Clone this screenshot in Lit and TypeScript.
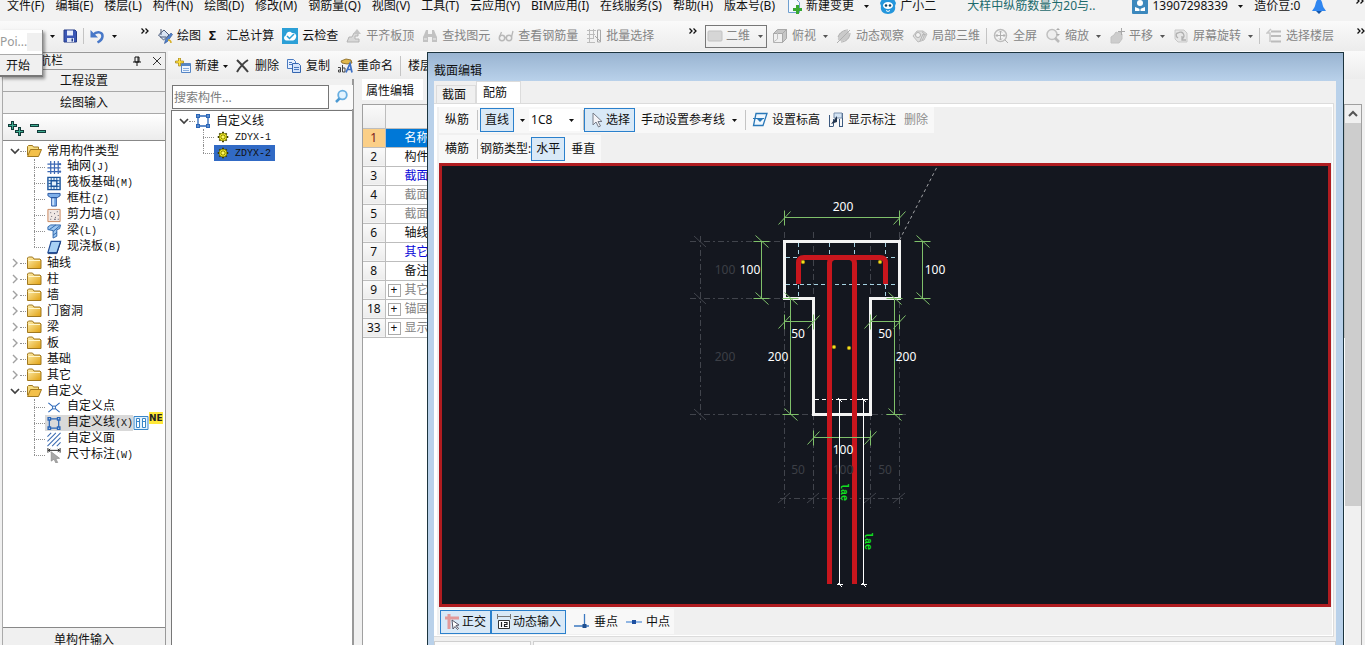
import { LitElement, html, svg, css, nothing, TemplateResult } from "lit";
import { customElement, property } from "lit/decorators.js";
import { classMap } from "lit/directives/class-map.js";

const folder = svg`<defs><linearGradient id="g" x1="0" y1="0" x2="1" y2="1"><stop offset="0" stop-color="#fff0b0"/><stop offset="1" stop-color="#e0a010"/></linearGradient></defs>
  <path d="M1.500 4.500V3l1-1h4l1.500 2h6l1 1v8.500H1.500z" fill="url(#g)" stroke="#a07820"/><path d="M2.500 5.500h11.500" stroke="#fff6cc"/>`;
const folderOpen = svg`<path d="M1.500 12V3.500l1-1h4l1 1.500h5V6" fill="#f7dc80" stroke="#a07820"/><path d="M1.500 13.500L4.500 6.500h11l-3 7z" fill="#f3c04a" stroke="#a07820"/>`;
const frame = svg`<path d="M3 3h10v10H3z" fill="none" stroke="#2a66b8" stroke-width="1.300"/><path d="M1 1h4v4H1zM11 1h4v4h-4zM1 11h4v4H1zM11 11h4v4h-4z" fill="#2a66b8"/><path d="M2.500 2.500h1v1h-1zM12.500 2.500h1v1h-1zM2.500 12.500h1v1h-1zM12.500 12.500h1v1h-1z" fill="#fff"/>`;
const gear = svg`<path d="M8 2v12M2 8h12M3.800 3.800l8.400 8.400M12.200 3.800l-8.400 8.400" stroke="#3a3a00" stroke-width="2.200"/><circle cx="8" cy="8" r="4.500" fill="#f4ec20" stroke="#4a4a00" stroke-width=".6"/><path d="M8 4v8M4 8h8M5.500 5.500l5 5M10.500 5.500l-5 5" stroke="#4a4a00" stroke-width=".7"/><circle cx="8" cy="8" r="1.500" fill="#fff86a"/>`;

const ICONS: Record<string, TemplateResult> = {
  folder, folderOpen, frame, gear,
  save: svg`<path d="M2 2h11l1.500 1.500V14H2z" fill="#3b57b5" stroke="#263c88"/><path d="M5 2.500h6v5H5z" fill="#e8eefc"/><path d="M5 10h7v4H5z" fill="#dde4f4"/><path d="M9.500 10.500h1.500v3H9.500z" fill="#263c88"/>`,
  undo: svg`<path d="M4 7C8 2.500 14 4 13.500 8.500c-.4 3-2 4.500-5 6" fill="none" stroke="#4878c8" stroke-width="2.500"/><path d="M1.500 2v7.500H9z" fill="#4878c8"/>`,
  paint: svg`<path d="M1.500 7L7 2l5 5-5.500 5z" fill="#d8e4f4" stroke="#4a5a78"/><path d="M4 1v6M3 9h6" stroke="#4a5a78" fill="none"/><path d="M14 5l1.500 1.500-5 7-3 2 1-4z" fill="#4f83cc" stroke="#2b4f90" stroke-width=".6"/><path d="M11 12c2 0 3 1 3 3" stroke="#d8b02a" stroke-width="1.500" fill="none"/>`,
  cloudCheck: svg`<path d="M0 0h16v16H0z" fill="#2b9fd6"/><path d="M3 12c-2-2-.5-4.500 1-4.500C4 4 8 2.500 10 5c3-.5 5 2 4 4.500-.5 2-2 3-3 3H4z" fill="#fff"/><path d="M5 8l2.500 2.500L12 6" fill="none" stroke="#2b9fd6" stroke-width="1.500"/>`,
  align: svg`<path d="M1 14h12v-3H9V8h3V5H8l-2 4H3z" fill="#d8d8d8" stroke="#b4b4b4"/><path d="M7 6l4-5 4 5z" fill="#c4c4c4"/>`,
  bino: svg`<path d="M2 7l2-5h2v12H1V9zM14 7l-2-5h-2v12h5V9zM6 6h4v3H6z" fill="#c2c2c2"/><path d="M2 11h3M11 11h3" stroke="#eee"/>`,
  glasses: svg`<circle cx="4" cy="10" r="2.700" fill="none" stroke="#b8b8b8" stroke-width="1.500"/><circle cx="11" cy="10" r="2.700" fill="none" stroke="#b8b8b8" stroke-width="1.500"/><path d="M1.500 9l2-5M13.500 9l1.500-6M6.500 9.500h2" stroke="#b8b8b8" fill="none" stroke-width="1.300"/>`,
  batch: svg`<path d="M1 2.500h9M1 6.500h8M1 10.500h6M1 14.500h8M3.500 1v14M7.500 1v10" stroke="#bcbcbc"/><path d="M11.500 2h3v12h-3zM9 8l5 5" fill="none" stroke="#a8a8a8"/>`,
  rect: svg`<rect x="1" y="3" width="14" height="10" rx="1" fill="#d6d6d6" stroke="#c2c2c2"/>`,
  cube: svg`<path d="M1.500 5.500h9v9h-9z" fill="#f0f0f0" stroke="#b0b0b0"/><path d="M1.500 5.500l4-4h9l-4 4zM14.500 1.500v9l-4 4v-9z" fill="#c6c6c6" stroke="#a8a8a8"/><path d="M5.500 2v9l-4 3" fill="none" stroke="#c0c0c0"/>`,
  orbit: svg`<path d="M2 12C1 6 6 2 12 3c4 5-1 11-7 10z" fill="#cacaca"/><path d="M1 15L14 2M5 14c5 0 9-4 9-9M2 9c2-5 6-7 10-7" stroke="#b0b0b0" fill="none"/>`,
  local3d: svg`<path d="M1 8l4-5h6l4 3-3 6-6 2z" fill="#dedede" stroke="#bcbcbc"/><circle cx="6" cy="7" r="2.500" fill="#f4f4f4" stroke="#b0b0b0"/><path d="M8 13l3-7 3 1M10 4c3 1 3 4 0 8" stroke="#b4b4b4" fill="none"/>`,
  full: svg`<circle cx="7.500" cy="7.500" r="6" fill="#f4f4f4" stroke="#bcbcbc" stroke-width="1.500"/><path d="M7.500 3v9M3 7.500h9M6 4.500L7.500 3 9 4.500M6 10.500L7.500 12 9 10.500M4.500 6L3 7.500 4.500 9M10.500 6L12 7.500 10.500 9M12 12l3 3" stroke="#b0b0b0" fill="none"/>`,
  zoom: svg`<circle cx="7" cy="6.500" r="5" fill="#eee" stroke="#c0c0c0" stroke-width="1.500"/><path d="M10 10l4 4" stroke="#bababa" stroke-width="2.500"/><path d="M11 2h4l-2-2zM11 6h4l-2 2z" fill="#aaa"/>`,
  hand: svg`<path d="M2 15V9l3-2 2-3 2 1 2-1 2 2v5l-3 4z" fill="#cdcdcd" stroke="#c2c2c2"/><path d="M12.500 0v7M9 3.500h7" stroke="#a8a8a8"/>`,
  rotate: svg`<path d="M2 2h9l3 3v9H5l-3-3z" fill="#e6e6e6" stroke="#c8c8c8"/><path d="M5 5c5-3 8 3 4 6M9 8v4h4M5 10c-3-2-2-5 0-5" fill="none" stroke="#b0b0b0" stroke-width="1.300"/>`,
  floors: svg`<path d="M5 3.500h10M5 8h10M5 13.500h10" stroke="#bcbcbc" stroke-width="2"/><path d="M5 1L1 5h3v9" fill="none" stroke="#c8c8c8" stroke-width="1.500"/>`,
  docPlus: svg`<path d="M2.500 1.500h8l3 3v10h-11z" fill="#f4f9ff" stroke="#6f9fcf"/><path d="M7 10h3V7h3v3h3v3h-3v3h-3v-3H7z" fill="#38a832"/>`,
  mascot: svg`<path d="M0 5l2-4 4 1h4l4-1 2 4-1 3c1 5-2 8-7 8s-8-3-7-8z" fill="#2496dc"/><ellipse cx="8" cy="7.500" rx="5" ry="3.500" fill="#fff"/><circle cx="6" cy="7.500" r="1.300" fill="#146"/><circle cx="10" cy="7.500" r="1.300" fill="#146"/><path d="M6 12.500q2 2 4 0" stroke="#fff" fill="none"/>`,
  user: svg`<rect width="16" height="16" rx="1" fill="#3c88bd"/><circle cx="8" cy="5" r="3" fill="#fff"/><path d="M3 13V9l5 2 5-2v4z" fill="#fff"/><path d="M8 9v4" stroke="#3c88bd"/>`,
  bell: svg`<path d="M3 10c2-2 1-8 5-9 4 1 3 7 5 9l2 3H1z" fill="#2f86f0"/><path d="M5 13h6l-3 3z" fill="#1456a8"/>`,
  create: svg`<path d="M6.500 5.500h9v9h-9z" fill="#eef5ff" stroke="#5585c5"/><path d="M7 6h8v2H7z" fill="#5585c5"/><path d="M8 10.500h6M8 12.500h6" stroke="#88aede"/><path d="M3.500 0h2v3h3v2h-3v3h-2V5h-3V3h3z" fill="#ffe140" stroke="#a08010" stroke-width=".7"/>`,
  remove: svg`<path d="M2 2c4 4 7 7 11 12M13 2C8 5 5 9 2 14" stroke="#404040" stroke-width="2" fill="none"/>`,
  copy: svg`<path d="M1.500 1.500h6l2 2v7h-8z" fill="#e6f0ff" stroke="#4a7ac0"/><path d="M6.500 5.500h6l2 2v7h-8z" fill="#d3e3fb" stroke="#3566b0"/><path d="M8 9.500h5M8 11.500h5M3 4.500h3M3 6.500h3" stroke="#4a7ac0"/>`,
  rename: svg`<path d="M4 3l5-2 5 1 1 3-5 1-5-1z" fill="#e2b84c" stroke="#80601a" stroke-width=".8"/><path d="M1 9.500h2.500V14H1.500v-2h2M5.500 7v7h2.500v-4H5.500" fill="none" stroke="#444"/><path d="M9 14.500l4-9 2 9M10 11.500h5" stroke="#3d6fc4" stroke-width="1.700" fill="none"/>`,
  search: svg`<circle cx="9.500" cy="6" r="4.300" fill="#e4f4ff" stroke="#68afe2" stroke-width="1.800"/><path d="M6.500 9.500L3 13" stroke="#4d9ad2" stroke-width="2.500"/>`,
  plusPlus: svg`<path d="M4.500 0v9M0 4.500h9M11.500 6v9M7 10.500h9" stroke="#123b39" stroke-width="3"/><path d="M4.500 1v7M1 4.500h7M11.500 7v7M8 10.500h7" stroke="#3fae92"/>`,
  minusMinus: svg`<path d="M0 4.500h9M7 10.500h9" stroke="#123b39" stroke-width="3"/><path d="M1 4.500h7M8 10.500h7" stroke="#3fae92"/>`,
  grid: svg`<path d="M4.500 1v14M8.500 1v14M12.500 1v14M1 4.500h14M1 8.500h14M1 12.500h14" stroke="#3c68b4" stroke-width="1.300"/><circle cx="14.500" cy="4.500" r="1.200" fill="#3c68b4"/><circle cx="14.500" cy="12.500" r="1.200" fill="#3c68b4"/>`,
  raft: svg`<path d="M1.500 1.500h13v13h-13zM5 5h6v6H5z" fill="#e4f1fc" stroke="#1c559c" stroke-width="1.500"/><path d="M5 2v3M8 2v3M11 2v3M5 11v3M8 11v3M11 11v3M2 5h3M2 8h3M2 11h3M11 5h3M11 8h3M11 11h3" stroke="#1c559c"/>`,
  column: svg`<path d="M1.500 1.500h13v2.500l-3 2h-7l-3-2zM5.500 6h5v9h-5z" fill="#7fb0ea" stroke="#2855a0"/><path d="M7 7v7" stroke="#e0efff" stroke-width="1.500"/>`,
  wall: svg`<path d="M1.500 1.500h13v13h-13z" fill="#f0e8e4" stroke="#c8845a"/><path d="M4 5h1M8 6h1M11 4h1M5 9h1M9 10h1M12 8h1M4 12h1M8 12h2M12 12h1" stroke="#556"/>`,
  beam: svg`<path d="M1.500 3l3-2h10.500l-1 4-3 1v7l-4 2V7L1.500 6z" fill="#9cc6f0" stroke="#2d65ac"/><path d="M3 6l7-5M7 8l7-6M7 12l4-3" stroke="#2d65ac"/>`,
  slab: svg`<path d="M5 1.500h10l-4 12H1.500z" fill="#a8d0f4" stroke="#234f98" stroke-width="1.300"/><path d="M1.500 14.500h9.500l4-12" fill="none" stroke="#163a78"/>`,
  point: svg`<path d="M2 3l12 10M14 3L2 13" stroke="#2a66b8" stroke-width="1.200"/><path d="M6.500 6.500h3v3h-3z" fill="#fff" stroke="#2a66b8"/>`,
  hatch: svg`<path d="M1 5l4-4M1 10l9-9M1 15L15 1M6 15l9-9M11 15l4-4" stroke="#3a6ab0" stroke-width="1.100"/>`,
  measure: svg`<path d="M1.500 0v5M14.500 0v5M2 2.500h12M4 1L2 2.500 4 4M12 1l2 1.500L12 4" stroke="#222" fill="none"/><path d="M5 4l9 7-4 .5 2 4-2 .5-2-4-3 2z" fill="#a8a8a8" stroke="#808080" stroke-width=".6"/>`,
  book: svg`<path d="M1 1.500h14v13H1z" fill="#e2f2ff" stroke="#3a86c8"/><path d="M3.500 3.500h3v9h-3zM9.500 3.500h3v9h-3z" fill="#fff" stroke="#3a86c8"/><path d="M3 6.500h4M9 6.500h4" stroke="#3a86c8"/>`,
  arrow: svg`<path d="M4 1v12l3-3 2.500 5 2-1L9 9.500h4z" fill="#f4f4f8" stroke="#777c88"/>`,
  level: svg`<path d="M4 1.500h11l-4 12H1.500z" fill="#f0f8ff" stroke="#2a78b8" stroke-width="1.300"/><path d="M1 6.500h11" stroke="#2a78b8"/><path d="M5 7h6l-3 3z" fill="#2a78b8"/>`,
  mark: svg`<path d="M1.500 3v12M14.500 1v14M1.500 14.500h4M5.500 14V7M11.500 14V7M11 14.500h4" stroke="#3c5a80" fill="none"/><path d="M6 1h8v5H6z" fill="#d4e4f4" stroke="#7a90ac"/><path d="M3 12l6-8v6z" fill="#24364e"/>`,
  ortho: svg`<path d="M0 4h14M4 0v15" stroke="#e29a9a" stroke-width="3"/><path d="M7 6l1 9 2-2.500 2.500 3 1-1L11 11.500l3-.5z" fill="#fff" stroke="#556"/>`,
  dyn: svg`<path d="M1.500 0v5M14.500 0v5M1 2.500h14" stroke="#777"/><path d="M2.500 6.500h11v8h-11z" fill="#fff" stroke="#333"/><path d="M5.500 8v5M8 8.500h3v2H8.500V12.500h3" fill="none" stroke="#222" stroke-width="1.200"/>`,
  perp: svg`<path d="M0 12h15M10.500 0v12" stroke="#3b78c0" stroke-width="1.300"/><path d="M8.500 10h4v4h-4z" fill="#1f4f90"/>`,
  mid: svg`<path d="M0 8h16" stroke="#6fa0dc" stroke-width="1.500"/><path d="M6 6h4v4H6z" fill="#1d4fa0"/>`,
};

const icon = (name: string) => html`<svg class="icon" viewBox="0 0 16 16" aria-hidden="true">${ICONS[name]}</svg>`;
const caret = html`<svg class="caret" viewBox="0 0 5 3" aria-hidden="true"><path d="M0 0h5L2.500 3z" fill="currentColor"/></svg>`;
const more = html`<svg class="more" viewBox="0 0 8 6" aria-hidden="true"><path d="M.5 .5L3 3 .5 5.500M4.500 .5L7 3 4.500 5.500" fill="none" stroke="#111" stroke-width="1.300"/></svg>`;
const chevron = (open: boolean) => html`<svg class="chev" viewBox="0 0 10 10" aria-hidden="true">
  ${open ? svg`<path d="M1 3l4 4 4-4" fill="none" stroke="#404040" stroke-width="1.700"/>` : svg`<path d="M3 1l4 4-4 4" fill="none" stroke="#a0a0a0" stroke-width="1.400"/>`}</svg>`;

const shared = css`
  * { box-sizing: border-box; }
  button, input, select { font: inherit; color: inherit; margin: 0; padding: 0; border: 0; border-radius: 0; background: none; }
  button { display: flex; align-items: center; gap: 4px; white-space: nowrap; flex: none; }
  ul { list-style: none; margin: 0; padding: 0; }
  .icon { width: 16px; height: 16px; flex: none; display: block; }
  .caret { width: 5px; height: 3px; flex: none; display: block; }
  .more { width: 8px; height: 6px; flex: none; display: block; }
  .chev { width: 10px; height: 10px; flex: none; display: block; }
  .sep { width: 1px; height: 20px; background: #c4c4c4; flex: none; }
`;

interface Node { label: string; key?: string; icon: string; open?: boolean; children?: Node[]; selected?: boolean; badge?: boolean; }

const NAV: Node[] = [
  { label: "常用构件类型", icon: "folderOpen", open: true, children: [
    { label: "轴网", key: "(J)", icon: "grid" },
    { label: "筏板基础", key: "(M)", icon: "raft" },
    { label: "框柱", key: "(Z)", icon: "column" },
    { label: "剪力墙", key: "(Q)", icon: "wall" },
    { label: "梁", key: "(L)", icon: "beam" },
    { label: "现浇板", key: "(B)", icon: "slab" },
  ] },
  ...["轴线", "柱", "墙", "门窗洞", "梁", "板", "基础", "其它"].map((label) => ({ label, icon: "folder" })),
  { label: "自定义", icon: "folderOpen", open: true, children: [
    { label: "自定义点", icon: "point" },
    { label: "自定义线", key: "(X)", icon: "frame", selected: true, badge: true },
    { label: "自定义面", icon: "hatch" },
    { label: "尺寸标注", key: "(W)", icon: "measure" },
  ] },
];

const COMPONENTS: Node[] = [
  { label: "自定义线", icon: "frame", open: true, children: [
    { label: "", key: "ZDYX-1", icon: "gear" },
    { label: "", key: "ZDYX-2", icon: "gear", selected: true },
  ] },
];

@customElement("item-tree")
class ItemTree extends LitElement {
  @property({ attribute: false }) nodes: Node[] = [];
  @property() tone = "grey";

  static styles = [shared, css`
    :host { display: block; }
    .row { display: flex; align-items: center; height: 16px; line-height: 16px; white-space: nowrap; }
    .root { padding-left: 7px; }
    .stub { width: 6px; border-top: 1px dotted #909090; flex: none; }
    .root .label { padding-left: 5px; }
    .kids { margin-left: 31px; }
    .kid { position: relative; }
    .kid::before { content: ""; position: absolute; left: 0; top: 0; height: 100%; border-left: 1px dotted #909090; }
    .kid:last-child::before { height: 8px; }
    .kid .stub { width: 11px; }
    .item { display: flex; align-items: center; height: 16px; gap: 5px; }
    .grey { padding-left: 1px; }
    .item .icon { height: 15px; }
    .grey.sel { background: #d9d9d9; }
    .blue { padding: 0 4px 0 2px; }
    .blue .icon { width: 14px; height: 14px; }
    .blue.sel { background: #316ac5; }
    .key { font-family: "Liberation Mono", monospace; font-size: 10px; }
    .new { align-self: flex-start; height: 12px; margin-top: -3px; line-height: 12px; background: #ffe838; font: 700 9px/12px "DejaVu Sans", sans-serif; color: #222; }
  `];

  private leaf(n: Node) {
    return html`<li class="row kid" role="treeitem"><span class="stub"></span>
      <span class=${classMap({ item: true, sel: !!n.selected, grey: this.tone === "grey", blue: this.tone === "blue" })}>
        ${icon(n.icon)}<span>${n.label}<span class="key">${n.key ?? ""}</span></span></span>
      ${n.badge ? html`${icon("book")}<span class="new">NE</span>` : nothing}</li>`;
  }

  render() {
    return html`<ul role="tree">${this.nodes.map((n) => html`<li role="treeitem">
      <div class="row root">${chevron(!!n.open)}<span class="stub"></span>${icon(n.icon)}<span class="label">${n.label}</span></div>
      ${n.children ? html`<ul class="kids" role="group">${n.children.map((c) => this.leaf(c))}</ul>` : nothing}
    </li>`)}</ul>`;
  }
}

type Axis = "h" | "v";

@customElement("section-canvas")
class SectionCanvas extends LitElement {
  static styles = css`
    :host { display: block; min-height: 0; background: #14171f; border: 3px solid #b01c20; }
    svg { display: block; width: 100%; height: 100%; }
    .dim { stroke: #7fc06a; fill: none; }
    .ghost { stroke: #41444c; fill: none; stroke-dasharray: 6 3 2 3; }
    .tick { stroke: #41444c; }
    .num { fill: #fff; font: 12px "Noto Sans", sans-serif; text-anchor: middle; }
    .faint { fill: #3c3f46; font: 12px "Noto Sans", sans-serif; text-anchor: middle; }
    .anchor { fill: #10e020; font: 700 10px "Liberation Mono", monospace; }
    .bar { stroke: #c8161d; stroke-width: 5; fill: none; }
    .guide { stroke: #a6d2e2; stroke-dasharray: 4 3; fill: none; }
    .white { stroke: #fff; fill: none; }
    .outline { stroke: #f4f4f4; stroke-width: 3; fill: none; }
    .dot { fill: #f0e020; stroke: #a89010; }
  `;

  private dim(axis: Axis, at: number, from: number, to: number) {
    const end = (p: number) => axis === "h"
      ? `M${p} ${at - 7}v15M${p - 6} ${at + 7}l12 -13`
      : `M${at - 8} ${p}h16M${at - 6} ${p - 6}l13 12`;
    const line = axis === "h" ? `M${from} ${at}H${to}` : `M${at} ${from}V${to}`;
    return svg`<path class="dim" d=${line + end(from) + end(to)}/>`;
  }

  private num(x: number, y: number, text: string, faint = false) {
    return svg`<text class=${faint ? "faint" : "num"} x=${x} y=${y}>${text}</text>`;
  }

  render() {
    return html`<svg viewBox="442 166 886 438" role="img" aria-label="截面配筋图">
      <path class="ghost" d="M784.500 232V508M813.500 232V508M870.500 232V508M899.500 232V508M690 241.500H784M690 298.500H784M690 414.500H906M700.500 236V420M780 498.500H905"/>
      <path class="tick" d="M694 236l12 11M694 293l12 11M694 409l12 11M778 503l12 -10M807 503l12 -10M864 503l12 -10M893 503l12 -10"/>
      <path class="white" stroke-dasharray="3 3" opacity=".6" d="M899.500 240L938 165"/>
      <path class="outline" d="M784.500 241.500H899.500V298.500H870.500V414.500H813.500V298.500H784.500z"/>
      <path class="guide" d="M798.500 243V298M829.500 243V257M854.500 243V257M885.500 243V298M786 257.500H898M786 284.500H898"/>
      <path class="guide white" d="M815 399.500H869"/>
      <path class="bar" d="M798.500 284V263Q798.500 257.500 804 257.500H880Q885.500 257.500 885.500 263V284M829.500 584V263Q829.500 258.500 834 257.500M854.500 584V263Q854.500 258.500 850 257.500"/>
      ${this.dim("h", 217.5, 784.5, 899.5)}
      ${this.dim("v", 761.5, 241.5, 298.5)}
      ${this.dim("v", 922.5, 241.5, 298.5)}
      ${this.dim("v", 790.5, 298.5, 414.5)}
      ${this.dim("v", 894.5, 298.5, 414.5)}
      ${this.dim("h", 321.5, 784.5, 813.5)}
      ${this.dim("h", 321.5, 870.5, 899.5)}
      ${this.dim("h", 437.5, 813.5, 870.5)}
      <path class="white" d="M839.500 400V585M863.500 400V585M837 399.500h6M861 399.500h6M837 584.500h6M861 584.500h6M838 398l4 4M862 398l4 4M838 583l4 4M862 583l4 4"/>
      ${[[803, 262], [880, 262], [834, 347], [849, 348]].map(([x, y]) => svg`<circle class="dot" cx=${x} cy=${y} r="1.700"/>`)}
      ${this.num(843, 211, "200")}${this.num(750, 274, "100")}${this.num(935, 274, "100")}
      ${this.num(798, 338, "50")}${this.num(885, 338, "50")}${this.num(778, 361, "200")}${this.num(906, 361, "200")}
      ${this.num(843, 454, "100")}
      ${this.num(725, 274, "100", true)}${this.num(725, 361, "200", true)}
      ${this.num(798, 474, "50", true)}${this.num(843, 474, "100", true)}${this.num(885, 474, "50", true)}
      <text class="anchor" transform="translate(841 483) rotate(90)">lae</text>
      <text class="anchor" transform="translate(865 532) rotate(90)">lae</text>
    </svg>`;
  }
}

@customElement("section-dialog")
class SectionDialog extends LitElement {
  static styles = [shared, css`
    :host { display: flex; flex-direction: column; border: 1px solid #1c343e; border-bottom: 0; background: #b9d1ea; padding: 0 7px 0 6px; }
    .title { flex: none; height: 28px; margin: 0 -7px 0 -6px; padding: 4px 6px 0; background: linear-gradient(#99b4d1, #b9d1ea); }
    .title span { display: block; line-height: 28px; }
    .body { flex: 1; min-height: 0; display: flex; flex-direction: column; background: #f0f0f0; }
    .tabs { display: flex; align-items: flex-end; height: 22px; flex: none; padding-left: 2px; }
    .tab { height: 18px; padding: 0 9px 0 5px; border: 1px solid #dcdcdc; border-bottom: 0; }
    .tab.on { height: 22px; padding-left: 6px; width: 45px; background: #fff; }
    .page { flex: 1; min-height: 0; display: flex; flex-direction: column; margin-right: 2px; border: 1px solid #dcdcdc; border-left: 0; padding: 3px 2px 2px 5px; box-shadow: inset 3px 3px #fff, inset -1px -1px #fff; }
    .bar { display: flex; align-items: center; flex: none; align-self: flex-start; height: 26px; background: #f8f8f8; padding: 0 6px; }
    .bar + .bar { margin-top: 2px; height: 28px; }
    .on-btn { height: 24px; border: 1px solid #2a80cc; background: #d9e9f7; padding: 0 4px; gap: 1px; }
    .cell { position: relative; display: flex; align-items: center; width: 51px; height: 22px; background: #fff; margin: 0 3px 0 4px; }
    .cell select { appearance: none; width: 100%; height: 100%; padding-left: 2px; }
    .cell .caret { position: absolute; right: 6px; pointer-events: none; }
    .g1 { margin-left: 6px; }
    .g2 { margin-left: 8px; }
    .split { margin: 0 2px 0 8px; }
    .dis { color: #8d8d8d; }
    .wide { gap: 7px; }
    section-canvas { flex: 1; }
    .status { margin-top: 2px; height: 25px; padding: 0 4px 0 1px; }
    .foot { flex: none; height: 7px; margin-top: 1px; display: grid; grid-template-columns: 97px 1fr; gap: 2px; }
    .foot span { border: 1px solid #cfcfcf; border-bottom: 0; background: #fafafa; margin-top: 3px; }
  `];

  render() {
    return html`
      <div class="title"><span>截面编辑</span></div>
      <div class="body">
        <div class="tabs" role="tablist"><button class="tab" role="tab">截面</button><button class="tab on" role="tab" aria-selected="true">配筋</button></div>
        <div class="page">
          <div class="bar">
            <span>纵筋</span><span class="sep split"></span>
            <button class="on-btn">直线</button><button class="g1" aria-label="直线选项">${caret}</button>
            <label class="cell"><select aria-label="钢筋规格"><option>1C8</option></select>${caret}</label>
            <span class="sep"></span>
            <button class="on-btn">${icon("arrow")}选择</button>
            <button class="g1 wide">手动设置参考线${caret}</button><span class="sep g2"></span>
            <button class="g1">${icon("level")}设置标高</button>
            <button class="g2">${icon("mark")}显示标注</button>
            <button class="g2 dis">删除</button>
          </div>
          <div class="bar">
            <span>横筋</span><span class="sep split"></span><span>钢筋类型:</span>
            <button class="on-btn">水平</button><button class="g1">垂直</button>
          </div>
          <section-canvas></section-canvas>
          <div class="bar status">
            <button class="on-btn">${icon("ortho")}正交</button><button class="on-btn">${icon("dyn")}动态输入</button>
            <button class="g2">${icon("perp")}垂点</button><button class="g2">${icon("mid")}中点</button>
          </div>
        </div>
        <div class="foot"><span></span><span></span></div>
      </div>`;
  }
}

const MENU = ["文件(F)", "编辑(E)", "楼层(L)", "构件(N)", "绘图(D)", "修改(M)", "钢筋量(Q)", "视图(V)", "工具(T)", "云应用(Y)", "BIM应用(I)", "在线服务(S)", "帮助(H)", "版本号(B)"];

const PROPS: { no: number; name: string; tone?: string; group?: boolean }[] = [
  { no: 1, name: "名称", tone: "cur" },
  { no: 2, name: "构件" },
  { no: 3, name: "截面", tone: "blue" },
  { no: 4, name: "截面", tone: "dim" },
  { no: 5, name: "截面", tone: "dim" },
  { no: 6, name: "轴线" },
  { no: 7, name: "其它", tone: "blue" },
  { no: 8, name: "备注" },
  { no: 9, name: "其它", tone: "dim", group: true },
  { no: 18, name: "锚固", tone: "dim", group: true },
  { no: 33, name: "显示", tone: "dim", group: true },
];

@customElement("app-root")
class AppRoot extends LitElement {
  static styles = [shared, css`
    :host { display: flex; flex-direction: column; position: relative; height: 100vh; overflow: hidden; background: #f0f0f0; color: #111; font: 12px/16px "Noto Sans", "Noto Sans CJK SC", sans-serif; }
    .menu { display: flex; flex: none; height: 21px; padding: 0 0 9px 7px; gap: 11px; line-height: 12px; align-items: center; background: #f2f2f2; white-space: nowrap; }
    .news { color: #1d6a6c; margin: 0 26px 0 20px; }
    .end { margin-left: auto; margin-right: 1px; }
    .tools { display: grid; grid-template-columns: 157px 548px 1fr; flex: none; height: 30px; background: linear-gradient(#fafafa, #ececec); }
    .group { display: flex; align-items: center; gap: 8px; min-width: 0; }
    .quick { padding-left: 50px; gap: 7px; }
    .more { margin-top: -10px; }
    .off { color: #858585; }
    .off .caret { color: #555; margin-left: 3px; }
    .tools .sep { height: 16px; margin: 0 -2px; }
    .push { margin-left: auto; margin-right: 8px; }
    .edge { margin-left: auto; }
    .view { position: relative; display: flex; align-items: center; width: 62px; height: 23px; border: 1px solid #777; margin-right: -3px; color: #858585; }
    .view select { appearance: none; position: absolute; inset: 0; padding-left: 20px; width: 100%; }
    .view .caret { position: absolute; right: 3px; color: #555; pointer-events: none; }
    .view .icon { margin-left: 1px; }
    .work { flex: 1; min-height: 0; display: grid; grid-template-columns: 168px 1fr; }
    .nav { display: flex; flex-direction: column; min-height: 0; margin: 1px 2px 0; border-right: 1px solid #999; border-left: 1px solid #aaa; }
    .head { display: flex; align-items: center; justify-content: flex-end; gap: 10px; height: 18px; border: 1px solid #999; border-width: 1px 0; padding-right: 3px; flex: none; }
    .head .name { margin-right: auto; padding-left: 24px; }
    .head svg { width: 10px; height: 10px; }
    .fold { height: 22px; justify-content: center; border-bottom: 1px solid #a8a8a8; }
    .nav .mini { display: flex; gap: 6px; height: 27px; padding: 4px 0 0 5px; background: linear-gradient(#fff, #ececec); border-bottom: 1px solid #888; flex: none; }
    .nav item-tree { flex: 1; min-height: 0; background: #fff; border-bottom: 1px solid #888; padding-top: 2px; overflow: hidden; }
    .bottom { height: 17px; border: 0; padding-top: 6px; }
    .main { display: flex; flex-direction: column; min-height: 0; min-width: 0; }
    .acts { display: flex; align-items: center; gap: 7px; height: 28px; padding: 2px 0 0 7px; background: linear-gradient(#fafafa, #ececec); flex: none; }
    .cols { flex: 1; min-height: 0; display: grid; grid-template-columns: 186px 1fr; gap: 8px; }
    .list { display: flex; flex-direction: column; border-right: 2px solid #999; }
    .find { display: flex; height: 31px; padding: 6px 0 1px 4px; align-items: center; flex: none; }
    .find input { width: 157px; height: 24px; border: 1px solid #767676; background: #fff; padding-left: 1px; outline: 0; }
    .find input::placeholder { color: #7c7c7c; opacity: 1; }
    .find button { width: 24px; height: 24px; justify-content: center; background: #fafafa; }
    .list item-tree { flex: 1; background: #fff; border: 1px solid #777; border-width: 1px 0 0 1px; margin-left: 3px; padding-top: 2px; }
    .prop { display: flex; flex-direction: column; min-width: 0; min-height: 0; margin-right: 3px; }
    .ptab { width: 61px; height: 21px; background: #fff; padding: 2px 0 0 4px; align-self: flex-start; }
    .sheet { flex: 1; min-height: 0; display: flex; border: 1px solid #a0a0a0; border-bottom: 0; background: #fff; margin-top: 4px; }
    .sheet table { flex: 1; border-collapse: collapse; align-self: flex-start; table-layout: fixed; }
    th, td { height: 19px; padding: 0; border: 1px solid #bdbdbd; border-width: 0 1px 1px 0; font-weight: 400; line-height: 18px; text-align: left; }
    thead th { height: 23px; background: #f4f4f4; }
    .no { width: 22px; text-align: center; background: linear-gradient(#fafafa, #ececec); }
    .pname { padding-left: 19px; }
    .grp { padding-left: 2px; }
    .grp button { float: left; width: 13px; height: 13px; margin: 3px 4px 0 0; border: 1px solid #aaa; line-height: 10px; justify-content: center; color: #111; }
    .cur { background: #0078d7; color: #fff; }
    .no.cur { background: #fbcf87; color: #7a2020; }
    .blue { color: #0a0ad8; }
    .dim { color: #858585; }
    .scroll { width: 16px; margin-left: auto; background: #f0f0f0; display: flex; flex-direction: column; flex: none; }
    .up { height: 18px; width: 16px; justify-content: center; }
    .thumb { height: 71%; background: #cdcdcd; }
    section-dialog { position: absolute; inset: 52px 21px 0 427px; }
    .float { position: absolute; left: 0; top: 30px; width: 43px; height: 47px; background: #f0f0f0; border-right: 1px solid #888; border-bottom: 2px solid #777; box-shadow: 2px 2px 3px #0006; overflow: hidden; }
    .ftitle { display: flex; align-items: center; justify-content: space-between; height: 25px; background: #fff; color: #999; border-bottom: 1px solid #aaa; }
    .ftitle i { width: 19px; height: 18px; background: #f0f0f0; }
    .float button { height: 22px; padding-left: 6px; }
  `];

  private tool(name: string, label: string, off = true, drop = false) {
    return html`<button class=${off ? "off" : ""}>${icon(name)}${label}${drop ? caret : nothing}</button>`;
  }

  render() {
    return html`
      <nav class="menu">
        ${MENU.map((m) => html`<button>${m}</button>`)}
        <button>${icon("docPlus")}新建变更 &nbsp;${caret}</button>
        <button>${icon("mascot")}广小二</button>
        <span class="news">大样中纵筋数量为20与..</span>
        <button>${icon("user")}13907298339 &nbsp;${caret}</button>
        <span>造价豆:0</span>
        <button aria-label="消息">${icon("bell")}</button>
        <button class="end" aria-label="更多">${more}</button>
      </nav>
      <div class="tools">
        <div class="group quick">${caret}<button aria-label="保存">${icon("save")}</button><span class="sep"></span>
          <button aria-label="撤销">${icon("undo")}</button>${caret}<button class="push" aria-label="更多">${more}</button></div>
        <div class="group">
          ${this.tool("paint", "绘图", false)}<button><b>Σ</b>&nbsp;&nbsp;汇总计算</button>
          ${this.tool("cloudCheck", "云检查", false)}${this.tool("align", "平齐板顶")}${this.tool("bino", "查找图元")}
          ${this.tool("glasses", "查看钢筋量")}${this.tool("batch", "批量选择")}
          <button class="push" aria-label="更多">${more}</button>
        </div>
        <div class="group">
          <label class="view">${icon("rect")}<select aria-label="视图模式"><option>二维</option></select>${caret}</label>
          ${this.tool("cube", "俯视", true, true)}${this.tool("orbit", "动态观察")}${this.tool("local3d", "局部三维")}
          <span class="sep"></span>${this.tool("full", "全屏")}${this.tool("zoom", "缩放", true, true)}
          ${this.tool("hand", "平移", true, true)}${this.tool("rotate", "屏幕旋转", true, true)}
          <span class="sep"></span>${this.tool("floors", "选择楼层")}
          <button class="edge" aria-label="更多">${more}</button>
        </div>
      </div>
      <div class="work">
        <aside class="nav">
          <div class="head"><span class="name">导航栏</span>
            <svg viewBox="0 0 10 10" aria-hidden="true"><path d="M3 1h4v5H3zM1 6h8M5 6v4M6 1v5" fill="none" stroke="#111"/></svg>
            <svg viewBox="0 0 10 10" aria-hidden="true"><path d="M1 1l8 8M9 1L1 9" stroke="#333"/></svg></div>
          <button class="fold">工程设置</button><button class="fold">绘图输入</button>
          <div class="mini"><button aria-label="全部展开">${icon("plusPlus")}</button><button aria-label="全部折叠">${icon("minusMinus")}</button></div>
          <item-tree .nodes=${NAV}></item-tree>
          <button class="fold bottom">单构件输入</button>
        </aside>
        <main class="main">
          <div class="acts">
            <button>${icon("create")}新建${caret}</button>${this.tool("remove", "删除", false)}
            ${this.tool("copy", "复制", false)}${this.tool("rename", "重命名", false)}<span class="sep"></span><button>楼层</button>
          </div>
          <div class="cols">
            <section class="list">
              <div class="find"><input type="search" aria-label="搜索构件" placeholder="搜索构件..."><button aria-label="搜索">${icon("search")}</button></div>
              <item-tree tone="blue" .nodes=${COMPONENTS}></item-tree>
            </section>
            <section class="prop">
              <button class="ptab" role="tab">属性编辑</button>
              <div class="sheet">
                <table>
                  <thead><tr><th class="no"></th><th></th></tr></thead>
                  <tbody>${PROPS.map((p) => html`<tr>
                    <th class=${classMap({ no: true, cur: p.tone === "cur" })}>${p.no}</th>
                    <td class=${`${p.group ? "grp" : "pname"} ${p.tone ?? ""}`}>${p.group ? html`<button aria-label="展开">+</button>` : nothing}${p.name}</td></tr>`)}</tbody>
                </table>
                <div class="scroll"><button class="up" aria-label="向上滚动"><svg class="chev" viewBox="0 0 10 10"><path d="M1 7l4-4 4 4" fill="none" stroke="#555" stroke-width="2"/></svg></button><div class="thumb"></div></div>
              </div>
            </section>
          </div>
        </main>
      </div>
      <section-dialog role="dialog" aria-label="截面编辑"></section-dialog>
      <div class="float"><div class="ftitle"><span>Poi...</span><i></i></div><button>开始</button></div>
    `;
  }
}
